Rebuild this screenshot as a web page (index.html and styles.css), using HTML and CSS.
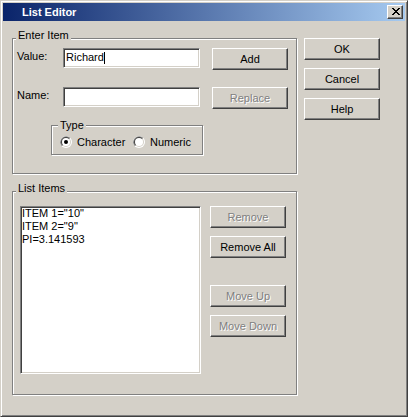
FILE: index.html
```html
<!DOCTYPE html>
<html lang="en">
<head>
    <meta charset="UTF-8">
    <title>List Editor</title>
    <link rel="stylesheet" href="styles.css">
</head>
<body>
    <div class="window">
        <div class="titlebar">
            <span class="title">List Editor</span>
            <span class="close-btn">
                <svg width="8" height="7" viewBox="0 0 8 7" shape-rendering="crispEdges">
                    <path d="M0 0h2v1H0zM6 0h2v1H6zM1 1h2v1H1zM5 1h2v1H5zM2 2h4v1H2zM3 3h2v1H3zM2 4h4v1H2zM1 5h2v1H1zM5 5h2v1H5zM0 6h2v1H0zM6 6h2v1H6z" fill="#000"/>
                </svg>
            </span>
        </div>

        <div class="client">
            <div class="main-col">
                <!-- Enter Item -->
                <div class="group group-enter">
                    <div class="group-title title-enter">Enter Item</div>
                    <div class="field-row">
                        <span class="field-label">Value:</span>
                        <div class="textbox">Richard<span class="caret"></span></div>
                        <button class="btn">Add</button>
                    </div>
                    <div class="field-row">
                        <span class="field-label">Name:</span>
                        <div class="textbox"></div>
                        <button class="btn" disabled>Replace</button>
                    </div>
                    <div class="group group-type">
                        <div class="group-title title-type">Type</div>
                        <div class="radio-row">
                            <label class="radio radio-first">
                                <svg width="12" height="12" viewBox="0 0 12 12">
                                    <circle cx="6" cy="6" r="6" fill="#fff"/>
                                    <path d="M1.76 10.24A6 6 0 0 1 10.24 1.76Z" fill="#808080"/>
                                    <circle cx="6" cy="6" r="5" fill="#D4D0C8"/>
                                    <path d="M2.46 9.54A5 5 0 0 1 9.54 2.46Z" fill="#404040"/>
                                    <circle cx="6" cy="6" r="4" fill="#fff"/>
                                    <circle cx="6" cy="6" r="2" fill="#000"/>
                                </svg>
                                Character
                            </label>
                            <label class="radio">
                                <svg width="12" height="12" viewBox="0 0 12 12">
                                    <circle cx="6" cy="6" r="6" fill="#fff"/>
                                    <path d="M1.76 10.24A6 6 0 0 1 10.24 1.76Z" fill="#808080"/>
                                    <circle cx="6" cy="6" r="5" fill="#D4D0C8"/>
                                    <path d="M2.46 9.54A5 5 0 0 1 9.54 2.46Z" fill="#404040"/>
                                    <circle cx="6" cy="6" r="4" fill="#fff"/>
                                </svg>
                                Numeric
                            </label>
                        </div>
                    </div>
                </div>

                <!-- List Items -->
                <div class="group group-list">
                    <div class="group-title title-list">List Items</div>
                    <div class="list-row">
                        <div class="listbox">
                            <div>ITEM 1="10"</div>
                            <div>ITEM 2="9"</div>
                            <div>PI=3.141593</div>
                        </div>
                        <div class="list-buttons">
                            <button class="btn" disabled>Remove</button>
                            <button class="btn">Remove All</button>
                            <button class="btn btn-gap" disabled>Move Up</button>
                            <button class="btn" disabled>Move Down</button>
                        </div>
                    </div>
                </div>
            </div>

            <div class="side-col">
                <button class="btn">OK</button>
                <button class="btn">Cancel</button>
                <button class="btn">Help</button>
            </div>
        </div>
    </div>
</body>
</html>
```

FILE: styles.css
```css
html, body {
    margin: 0;
    background-color: #D4D0C8;
}
body {
    font-family: "Liberation Sans", Arial, sans-serif;
    font-size: 11px;
    line-height: 13px;
    color: #000;
}
.window {
    width: 408px;
    height: 417px;
    box-sizing: border-box;
    border: 1px solid;
    border-color: #D4D0C8 #404040 #404040 #D4D0C8;
    box-shadow: inset 1px 1px #fff, inset -1px -1px #808080;
    padding: 2px;
    background-color: #D4D0C8;
}
.titlebar {
    height: 18px;
    display: flex;
    align-items: center;
    justify-content: space-between;
    padding: 0 2px 0 19px;
    background: linear-gradient(to right, #0A246A, #A6CAF0);
    color: #fff;
    font-weight: bold;
}
.title {
    line-height: 18px;
}
.close-btn {
    width: 16px;
    height: 14px;
    box-sizing: border-box;
    display: flex;
    padding: 2px 0 0 4px;
    background-color: #D4D0C8;
    border: 1px solid;
    border-color: #fff #404040 #404040 #fff;
    box-shadow: inset -1px -1px #808080;
}
.client {
    display: flex;
    gap: 7px;
    padding: 17px 0 0 9px;
}
.main-col {
    width: 285px;
}

/* etched group boxes */
.group {
    border: 1px solid #808080;
    box-shadow: inset 1px 1px #fff, 1px 1px #fff;
}
.group-title {
    width: fit-content;
    height: 13px;
    margin-top: -10px;
    padding: 0 2px;
    background-color: #D4D0C8;
}
.group-enter {
    padding: 0 0 18px 4px;
}
.title-enter {
    margin-left: -1px;
}
.group-list {
    margin-top: 17px;
    padding: 0 0 20px 7px;
}
.title-list {
    margin-left: -4px;
}
.group-type {
    width: 152px;
    box-sizing: border-box;
    margin: 16px 0 0 34px;
    padding: 0 0 6px 8px;
}
.title-type {
    margin: -7px 0 0 -2px;
}

.field-row {
    display: flex;
    align-items: flex-start;
    margin-top: 6px;
}
.field-row + .field-row {
    margin-top: 17px;
}
.field-label {
    width: 46px;
    padding-top: 2px;
}
.textbox, .listbox {
    box-sizing: border-box;
    background-color: #fff;
    border: 1px solid;
    border-color: #808080 #fff #fff #808080;
    box-shadow: inset 1px 1px #404040, inset -1px -1px #D4D0C8;
}
.textbox {
    width: 137px;
    height: 20px;
    margin-right: 12px;
    padding: 2px 2px;
    white-space: nowrap;
}
.caret {
    display: inline-block;
    width: 1px;
    height: 12px;
    margin-top: 1px;
    vertical-align: top;
    background-color: #000;
}

.radio-row {
    display: flex;
    align-items: center;
    height: 12px;
    margin-top: 4px;
}
.radio {
    display: flex;
    align-items: center;
    gap: 5px;
}
.radio-first {
    width: 73px;
}

.btn {
    display: block;
    width: 76px;
    height: 22px;
    box-sizing: border-box;
    padding: 0;
    font-family: inherit;
    font-size: 11px;
    line-height: 13px;
    color: #000;
    background-color: #D4D0C8;
    border: 1px solid;
    border-color: #fff #404040 #404040 #fff;
    box-shadow: inset -1px -1px #808080;
    border-radius: 0;
}
.btn:disabled {
    color: #808080;
    text-shadow: 1px 1px #fff;
}

.list-row {
    display: flex;
    gap: 9px;
    margin-top: 11px;
}
.listbox {
    width: 181px;
    height: 168px;
    padding: 0 1px;
}
.list-buttons .btn + .btn {
    margin-top: 8px;
}
.list-buttons .btn + .btn-gap {
    margin-top: 27px;
}

.side-col {
    display: flex;
    flex-direction: column;
    gap: 8px;
}
```
